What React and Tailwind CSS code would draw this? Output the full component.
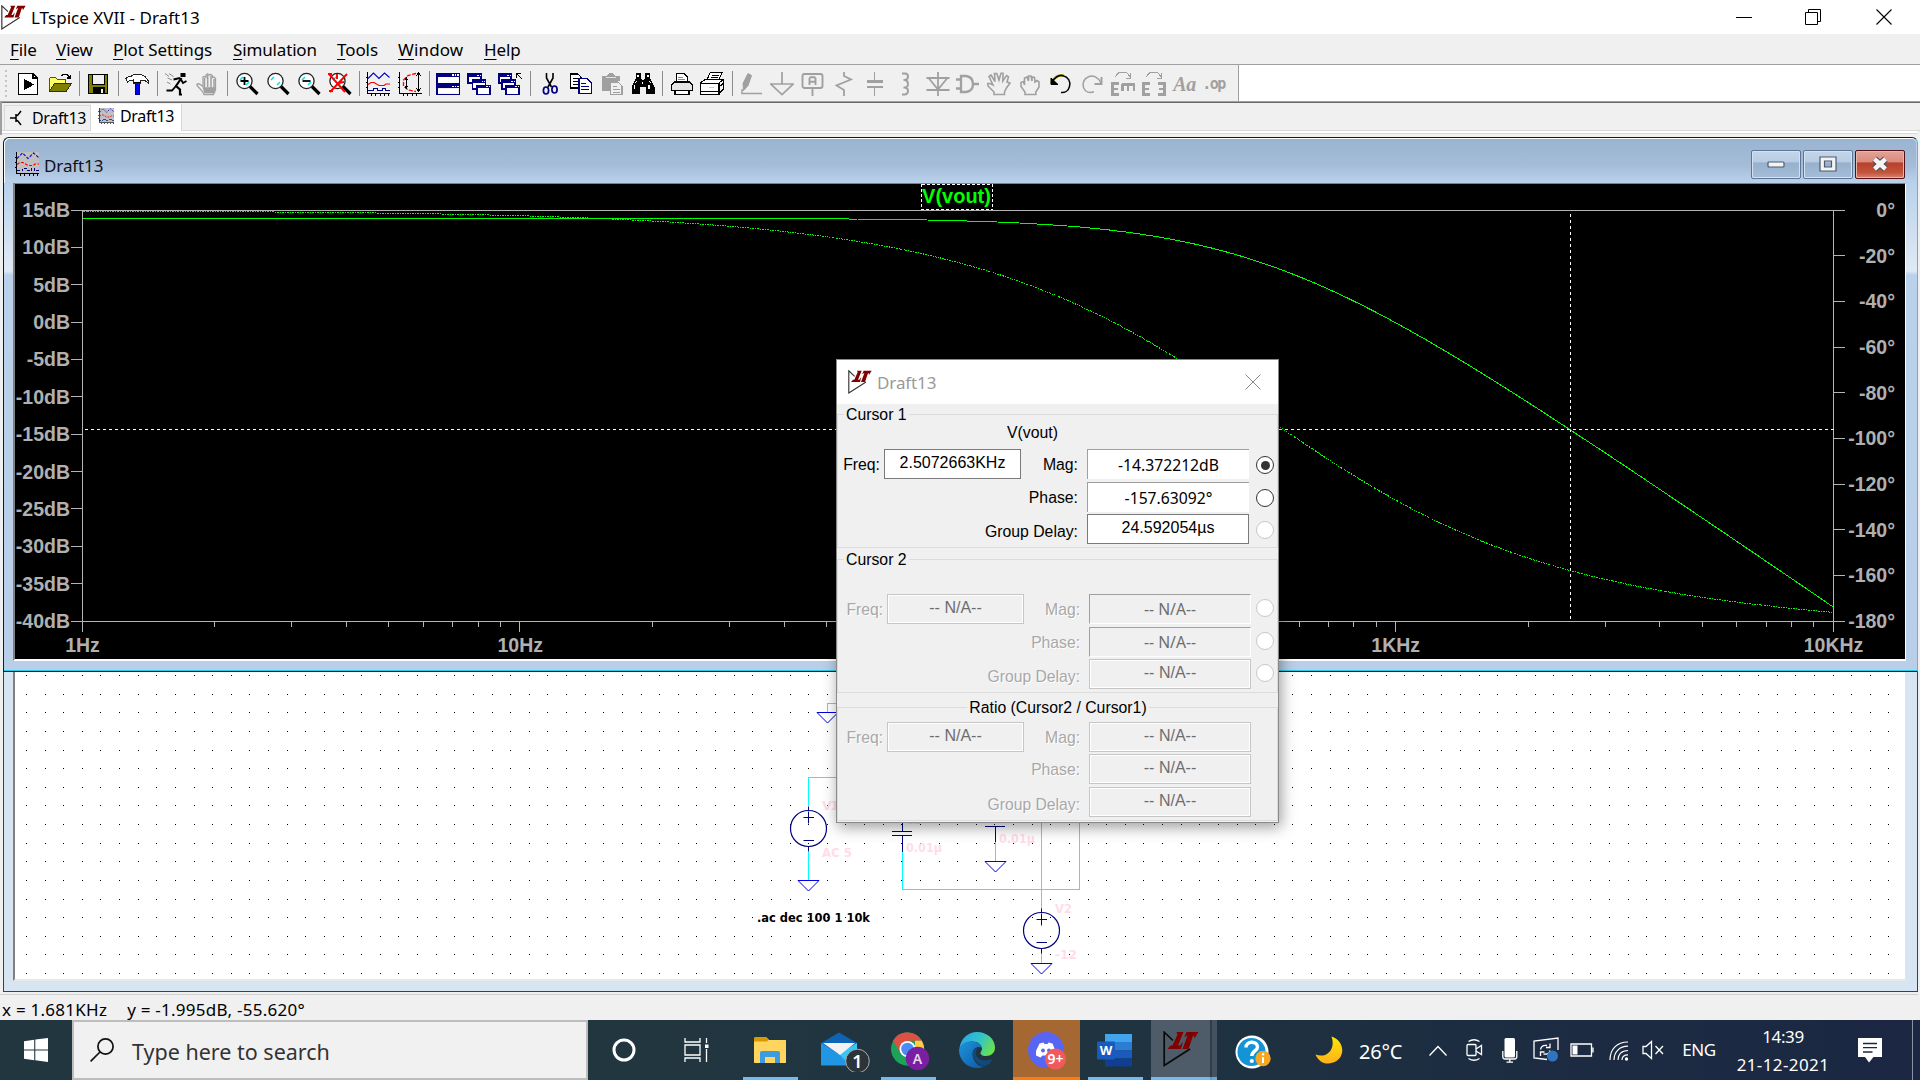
import React from "react";

const UI = "font-['Noto_Sans','Open_Sans',sans-serif]";
const ARIAL = "font-['Liberation_Sans',Arial,sans-serif]";

/* ---------- LT logo ---------- */
function LTLogo({ size = 24, line = "#333" }) {
  return (
    <svg width={size} height={size} viewBox="0 0 36 36" className="shrink-0">
      <path d="M10 9.500L1.200 1.200V34.500L27 18" fill="none" stroke={line} strokeWidth="1.700" />
      <path d="M13.500 1H20.500L15 14.500H17L20 10.500L18 18H4.500L7.500 14.500H9.500L14.500 3.500Z" fill="#800000" />
      <path d="M21 6.500L23.500 1H35.500L31.500 7.500L31 4.800H30L25.500 18H19.500L24.500 4.800H23.500Z" fill="#800000" />
    </svg>
  );
}

/* ---------- toolbar icons, 24 x 24 ---------- */
function I({ children, smooth, shift = "" }) {
  return (
    <span className={`flex w-[31px] shrink-0 justify-center ${shift}`}>
      <svg width="24" height="24" viewBox="0 0 24 24" fill="none" shapeRendering={smooth ? "auto" : "crispEdges"}>
        {children}
      </svg>
    </span>
  );
}
const Sep = () => (
  <span className="flex w-2 shrink-0 justify-center">
    <span className="h-[25px] w-px bg-[#8c8c8c]" />
  </span>
);
const G = "#a0a0a0";
const NV = "#000080";

function Lens({ children }) {
  return (
    <I smooth>
      <circle cx="9.500" cy="9" r="7.600" fill="#fff" stroke="#222" strokeWidth="1.300" />
      <path d="M5 8l3-3M11 13l3-3" stroke="#00e5e5" strokeWidth="1.500" />
      <path d="M15 14.500L22.500 22" stroke="#000" strokeWidth="3.200" />
      {children}
    </I>
  );
}

function MiniWin({ x, y, w = 13, h = 9 }) {
  return (
    <g>
      <rect x={x + 0.75} y={y + 0.75} width={w} height={h} fill="#fff" stroke={NV} strokeWidth="1.500" />
      <rect x={x} y={y} width={w + 1.5} height="3.500" fill={NV} />
      <path d={`M${x + w - 3} ${y + 2}h1.500M${x + w - 0.5} ${y + 2}h1`} stroke="#fff" strokeWidth="1" />
    </g>
  );
}

function PlotIcon({ size = 24, bg = "none" }) {
  const dash = bg === "none" ? undefined : "3 1.500";
  return (
    <svg width={size} height={size} viewBox="0 0 24 24" fill="none" shapeRendering="crispEdges" className="shrink-0">
      {bg !== "none" && <rect x="1" width="23" height="21" fill={bg} />}
      <path d="M1.500 0V21.500H24M0 5.500h1M0 10.500h1M0 15.500h1M5.500 22v2M9.500 22v2M14.500 22v2M18.500 22v2M22.500 22v2" stroke="#000" />
      <path d="M2 6.500L7.500 1L13 6.500L18.500 1L23.500 5.500" stroke="#0000d0" strokeWidth="1.100" strokeDasharray={dash} shapeRendering="auto" />
      <path d="M2 12.500L5 10.500H8L13 13.500H18L20 12H24" stroke="#f00" strokeWidth="1.200" strokeDasharray={dash} shapeRendering="auto" />
      <path d="M2 18.500H7.500V16.500H11.500V18.500H16.500V16.500H19.500V18.500H24" stroke={NV} strokeDasharray={dash} />
    </svg>
  );
}

function Toolbar() {
  return (
    <div className="flex h-[36px] shrink-0 bg-white">
      <div className="flex w-[1239px] items-center border-r border-[#a0a0a0] bg-[#f0f0f0] pt-px">
        <div className="flex w-[13px] shrink-0 flex-col items-center gap-[3px] pr-[2px]">
          {[0, 1, 2, 3, 4, 5].map((i) => (
            <span key={i} className="h-[2px] w-[2px] bg-[#c4c4c4]" />
          ))}
        </div>
        <I shift="pr-[2px]">
          <path d="M2.700 1.700H17.500L21.300 5.500V22.300H2.700Z" fill="#fff" stroke="#000" strokeWidth="1.400" />
          <path d="M17 1.700V6H21.300" stroke="#000" strokeWidth="1.200" />
          <path d="M7.500 6.500V18.500L18 12.500Z" fill="#000" />
        </I>
        <I>
          <path d="M1.500 18.500V6.500L3 5H7L9 7H17.500V11" fill="#ffff66" stroke="#555500" />
          <path d="M1.500 19L6.500 11.500H23.500L18.500 19Z" fill="#808000" stroke="#333300" />
          <path d="M13.500 4L15.500 2.200H19L22 5.500M22.500 2.500V6H19" stroke="#000" strokeWidth="1.300" />
        </I>
        <Sep />
        <I shift="pr-[2px]">
          <rect x="2.500" y="2.200" width="19" height="19.500" fill="#808000" stroke="#000" strokeWidth="1.400" />
          <rect x="6" y="2.500" width="12" height="9.500" fill="#f0f0f0" stroke="#000" />
          <rect x="6.500" y="15" width="12" height="6.500" fill="#000" />
          <rect x="14.500" y="16.500" width="2.500" height="4" fill="#f0f0f0" />
        </I>
        <Sep />
        <I shift="pr-[2px]">
          <path d="M10 11.500H14V22.500H10Z" fill="#0000ff" stroke={NV} />
          <path d="M.7 6.500L4 4.500L6.500 4L9 2.500H16L20 4.500L23.300 9V11L20 8.500H15.500V11.500H8.500V8L4.500 8.500L2.500 10Z" fill="#fff" stroke="#222" strokeWidth="1.100" />
          <path d="M8.500 10.500h7" stroke="#000" strokeWidth="1.800" />
        </I>
        <Sep />
        <I smooth shift="pr-[2px]">
          <path d="M16.500 1h5v4h-5z" fill="#000" />
          <path d="M17.500 6L12 14L16 17.500V22.500H18" stroke="#000" strokeWidth="2.200" />
          <path d="M16 6L9.500 7.500M17 7.500L19 11L22.500 9M12 14L8 18.500H2.500" stroke="#000" strokeWidth="1.800" />
          <path d="M1 1.500L5 4.500M5 1.500L9.500 4.500M3.500 6L8 8M3 10L6.500 12" stroke="#888" />
        </I>
        <I smooth>
          <path d="M8 22.500L7 20L1 13.500L1.200 12H3.500L7 14.500V5L8.200 4.500L10 5.500V3L11.500 1.800L13.200 3L15 2.500L16.500 4V5.500L18 5L19.500 6.500V18L17.500 20.500V22.500Z" fill="#f0f0f0" stroke={G} strokeWidth="1.300" />
          <path d="M7.500 16H18.500V20.500H9ZM8.500 6v10M11.700 3v12M15 4v12M18 7v10" fill={G} stroke={G} strokeWidth="1.500" />
        </I>
        <Sep />
        <Lens><path d="M5.500 9h8M9.500 5v8" stroke="#000" strokeWidth="1.800" /></Lens>
        <Lens />
        <Lens><path d="M5.500 9h8" stroke="#000" strokeWidth="1.800" /></Lens>
        <Lens><path d="M1 2L17 20M19 2L2 20M0 2h4M1 19h4M9 2v5M10 11l6-1" stroke="#f00" strokeWidth="1.900" /></Lens>
        <Sep />
        <span className="flex w-[31px] shrink-0 justify-center pr-[2px]"><PlotIcon /></span>
        <I>
          <path d="M1.500 0V21.500H24M0 5.500h1M0 10.500h1M0 15.500h1M5.500 22v2M9.500 22v2M14.500 22v2M18.500 22v2" stroke="#000" />
          <path d="M18 1.500L10 3.500L5.500 8V14L10 18L18 19.500" stroke="#f00" strokeWidth="1.300" strokeDasharray="4 1.500" shapeRendering="auto" />
          <path d="M20.500 1v18M18 4l2.500-3l2.500 3M18 16l2.500 3l2.500-3M8.500 6v10M7 8l1.500-2l1.500 2M7 14l1.500 2l1.500-2" stroke="#000" />
        </I>
        <Sep />
        <I shift="pr-[2px]">
          <rect x=".75" y="1.750" width="22.500" height="9.500" fill="#fff" stroke={NV} strokeWidth="1.500" />
          <path d="M0 3.200h24M0 14.500h24" stroke={NV} strokeWidth="3.500" />
          <rect x=".75" y="12.500" width="22.500" height="9.750" stroke={NV} strokeWidth="1.500" />
          <path d="M2 17h20v4H2z" fill="#fff" />
          <path d="M16 3h1.500M18.500 3h1.500M21 3h1.500M16 14.500h1.500M18.500 14.500h1.500M21 14.500h1.500" stroke="#fff" strokeWidth="1.200" />
        </I>
        <I shift="pr-[2px]"><MiniWin x={0} y={1} /><MiniWin x={4.5} y={7} /><MiniWin x={9} y={12.5} /></I>
        <I shift="pr-[2px]">
          <MiniWin x={0} y={1} w={12} /><MiniWin x={3} y={7} /><MiniWin x={7} y={12.5} />
          <path d="M18.500 6V1.500H23M19 2l5 5" stroke="#000" strokeWidth="1.300" />
        </I>
        <Sep />
        <I smooth>
          <path d="M8.500 1V6L13.500 15M15 1V6L10 15" stroke="#000" strokeWidth="1.600" />
          <ellipse cx="8" cy="18.500" rx="2.600" ry="3.500" stroke={NV} strokeWidth="1.700" />
          <ellipse cx="16.500" cy="17.500" rx="2.600" ry="3.500" stroke={NV} strokeWidth="1.700" />
        </I>
        <I>
          <path d="M1.500 2H9L12 5V16H1.500Z" fill="#fff" stroke="#000" strokeWidth="1.300" />
          <path d="M3.500 6h5M3.500 9h7M3.500 12h7" stroke="#000" />
          <path d="M10 6.500H18L22.500 11V21.500H10Z" fill="#fff" stroke={NV} strokeWidth="1.400" />
          <path d="M12 11h5M12 14h8M12 17h8" stroke={NV} />
        </I>
        <I>
          <path d="M2 4H7L9 1H13L15 4H20V9H10V19H2Z" fill={G} />
          <path d="M10.500 10H18L22 14V22.500H10.500Z" fill="#f0f0f0" stroke={G} strokeWidth="1.300" />
          <path d="M12.500 14h4M12.500 17h7M12.500 20h7" stroke={G} />
          <path d="M6 5.500h10" stroke="#e0e0e0" />
        </I>
        <I>
          <path d="M5 1H10V6L11 8H13L14 6V1H19V6L23.500 15V22H15V15H9V22H.5V15L5 6Z" fill="#000" />
          <path d="M7 3v2M17 3v2M3.500 13v4M5.500 9l-1 2M18.500 9l1 2M18 13v4M11.500 10v2" stroke="#fff" strokeWidth="1.300" />
        </I>
        <Sep />
        <I>
          <path d="M6.500 10V1.500H14L17.500 5V10" fill="#fff" stroke="#000" strokeWidth="1.100" />
          <path d="M4.500 10H19.500L22.500 13V18.500H1.500V13Z" fill="#e4e4e4" stroke="#000" strokeWidth="1.100" />
          <path d="M5 18.500H19V22.500H5Z" fill="#fff" stroke="#000" strokeWidth="1.100" />
          <path d="M8 5h5M8 7.500h7" stroke="#888" />
        </I>
        <I shift="pr-[2px]">
          <path d="M7 8L10 .8H22L18 9" fill="#fff" stroke="#000" strokeWidth="1.100" />
          <path d="M.8 10.500L5 7.500H23L19 11V22.300H.8Z" fill="#fff" stroke="#000" strokeWidth="1.200" />
          <path d="M.8 11H19M.8 19.500H19M19 15L23.300 11.500V8M19 22L23.300 17V11M11.500 3.300h7M10.500 5.600h7" stroke="#000" />
          <path d="M9 15.500h5" stroke="#e8e800" strokeWidth="1.500" />
        </I>
        <Sep />
        <I smooth>
          <path d="M8 1.500L11.500 3.500L8 13.500L3.500 18.500L3 11.500Z" fill={G} stroke={G} />
          <path d="M2 17V21.500H22" stroke={G} strokeWidth="1.500" />
        </I>
        <I smooth shift="pr-[2px]"><path d="M12 0V12M.8 12H23.200L12 22.500Z" stroke={G} strokeWidth="1.700" /></I>
        <I smooth shift="pr-[2px]">
          <rect x="1.500" y="2" width="20" height="14" rx="2" stroke={G} strokeWidth="1.900" />
          <path d="M11.500 16V24M8.500 13V6.500L9.500 5.200H13.500L14.500 6.500V13M8.500 9.800H14.500" stroke={G} strokeWidth="1.900" />
        </I>
        <I smooth shift="pr-[2px]"><path d="M12 0V4L19 7.500L4.500 13.500L12 18V24" stroke={G} strokeWidth="1.800" /></I>
        <I shift="pr-[2px]"><path d="M11.500 0V9M11.500 15V24" stroke={G} strokeWidth="1.500" /><path d="M3.500 9.500H19.500M3.500 15H19.500" stroke={G} strokeWidth="2.500" /></I>
        <I smooth shift="pr-[2px]"><path d="M8 1.500H11Q14 1.500 14 4.500T11 8H9.500H11Q14 8.500 14 12T11 15.500H9.500H11Q14 16 14 19T11 22.500H8" stroke={G} strokeWidth="1.900" /></I>
        <I smooth><path d="M12 0V24M.5 6H23.500M.5 18H23.500M3 6.500L12 17.500L21 6.500" stroke={G} strokeWidth="1.800" /></I>
        <I smooth shift="pr-[2px]"><path d="M0 7.500H5M0 16.500H5M5 4V20H10Q17 19 17 12T10 4ZM17 12H23" stroke={G} strokeWidth="2.300" /></I>
        <I smooth shift="pr-px">
          <path d="M7 22.500V20L1 14L.8 11.500H3L6 13L2 4.500L4 3L8 9.500L7.500 1.500H9.800L12 8L14 1.200H16L15.800 9L19.500 3.500L21.500 4.800L20 10L23 11L19.500 16L17.500 20V22.500Z" stroke={G} strokeWidth="1.600" />
        </I>
        <I smooth shift="pr-[2px]">
          <path d="M7 22.500V20L3 14.500V10.500L5.500 9.500L6.500 13V6L9 5L10.500 9V4L13 4L14 9V5L16.500 5.500L17 10L19 8.500L21 10V15L17.800 20V22.500Z" stroke={G} strokeWidth="1.600" />
        </I>
        <I smooth shift="pr-[2px]">
          <path d="M2.500 11C5 5 10 2.500 14.500 3.500" stroke="#a0a000" strokeWidth="2.600" />
          <path d="M2.500 11.500C5 5 10 3 14 3.800C19 5 22 9.500 20.500 14.500C19.500 18.500 16 21 12 20.500" stroke="#000" strokeWidth="1.500" />
          <path d="M2 6V12.500H9Z" fill="#000" stroke="#000" />
        </I>
        <I smooth shift="pr-[2px]">
          <path d="M21 11C18 5 13 3 9 4.500C4 6.500 2 11 3.500 15.500C5 19.500 9 21.500 14 19.800" stroke={G} strokeWidth="1.500" />
          <path d="M21.500 5V12H14.500" stroke={G} strokeWidth="2" />
        </I>
        <I shift="pr-[2px]">
          <path d="M4 5L7.500 .8H16L19 5M19.500 1V6H15" stroke={G} />
          <path d="M8 11.500H1.500V22.500H8M1.500 17H7" stroke={G} strokeWidth="2.300" />
          <path d="M10.500 12.500H24M11.500 12V18.500M17 12V18.500M22.800 12V18.500" stroke={G} strokeWidth="2.300" />
        </I>
        <I shift="pr-[2px]">
          <path d="M4 5L7.500 .8H16L19 5M19.500 1V6H15" stroke={G} />
          <path d="M8 11.500H1.500V22.500H8M1.500 17H7M16 11.500H22.500V22.500H16M22.500 17H17" stroke={G} strokeWidth="2.300" />
        </I>
        <span className="-ml-px flex w-[31px] shrink-0 justify-center font-['Liberation_Serif',serif] text-[20px] leading-6 font-bold italic tracking-[-0.5px] text-[#a0a0a0]">Aa</span>
        <span className="-ml-[2px] flex w-[31px] shrink-0 justify-center font-['DejaVu_Sans_Mono',monospace] text-[15px] leading-5 font-bold tracking-[-1.5px] text-[#a0a0a0]">.op</span>
      </div>
    </div>
  );
}

/* ---------- plot ---------- */
const X0 = 67.5, X1 = 1818.5, Y0 = 26.5, Y1 = 437.5;
const xf = (f) => X0 + (Math.log10(f) / 4) * (X1 - X0);
const response = (() => {
  const mag = [], ph = [];
  for (let i = 0; i <= 400; i++) {
    const f = 10 ** (i / 100);
    const r = f / 500.2;
    const re = 1 - r * r, im = r / 0.4965;
    const db = 13.979 - 20 * Math.log10(Math.hypot(re, im));
    const p = (-Math.atan2(im, re) * 180) / Math.PI - (1.8 * f) / 10000;
    mag.push(`${xf(f).toFixed(1)},${(Y0 + ((15 - db) / 55) * (Y1 - Y0)).toFixed(1)}`);
    ph.push(`${xf(f).toFixed(1)},${(Y0 + (-p / 180) * (Y1 - Y0)).toFixed(1)}`);
  }
  return { mag: mag.join(" "), ph: ph.join(" ") };
})();

function Plot() {
  const minors = [];
  for (let d = 0; d < 4; d++) for (let k = 2; k < 10; k++) minors.push(Math.round(xf(k * 10 ** d)));
  const cursorX = 1555.5, cursorY = 245.5;
  return (
    <svg width="1890" height="475" viewBox="0 0 1890 475" className="block bg-black" fill="none">
      <g stroke="#b4b4b4" strokeWidth="1" shapeRendering="crispEdges">
        <path d={`M56 ${Y0}H1830M56 ${Y1}H1830M${X0} ${Y0}V448M${X1} ${Y0}V448`} />
        {Array.from({ length: 10 }, (_, i) => (
          <path key={i} d={`M56 ${Math.round(Y0 + ((i + 1) * (Y1 - Y0)) / 11) - 0.5}H${X0}`} />
        ))}
        {Array.from({ length: 8 }, (_, i) => (
          <path key={i} d={`M${X1} ${Math.round(Y0 + ((i + 1) * (Y1 - Y0)) / 9) - 0.5}H1830`} />
        ))}
        {minors.map((x) => <path key={x} d={`M${x + 0.5} ${Y1}V443`} />)}
        {[1, 2, 3].map((d) => <path key={d} d={`M${Math.round(xf(10 ** d)) - 0.5} ${Y1}V448`} />)}
      </g>
      <polyline points={response.mag} stroke="#00ff00" strokeWidth="1" shapeRendering="crispEdges" />
      <polyline points={response.ph} stroke="#00ff00" strokeWidth="1" strokeDasharray="2 1 1 1" shapeRendering="crispEdges" />
      <path d={`M${X0 + 2} ${cursorY}H${X1}M${cursorX} ${Y0 + 3}V${Y1}`} stroke="#fff" strokeDasharray="3 3" shapeRendering="crispEdges" />
      <g className={ARIAL} fontSize="19.500" fontWeight="700" fill="#b0b0b0">
        {Array.from({ length: 12 }, (_, i) => (
          <text key={i} x="55" y={33 + (i * (Y1 - Y0)) / 11} textAnchor="end">{`${15 - 5 * i}dB`}</text>
        ))}
        {Array.from({ length: 10 }, (_, i) => (
          <text key={i} x="1880" y={33 + (i * (Y1 - Y0)) / 9} textAnchor="end">{`${i ? -20 * i : 0}°`}</text>
        ))}
        {["1Hz", "10Hz", "100Hz", "1KHz", "10KHz"].map((t, i) => (
          <text key={t} x={xf(10 ** i)} y="467.500" textAnchor="middle">{t}</text>
        ))}
      </g>
      <rect x="906.500" y=".5" width="71" height="25" stroke="#fff" strokeDasharray="3 2" shapeRendering="crispEdges" />
      <text x="941.500" y="19" textAnchor="middle" className={ARIAL} fontSize="20" fontWeight="700" fill="#00ff00">V(vout)</text>
    </svg>
  );
}

/* ---------- schematic; viewBox uses screen coordinates ---------- */
const dots = (() => {
  let d = "";
  for (let r = 0; r < 17; r++)
    for (let c = 0; c <= 100; c++) d += `M${Math.round(26 + c * 18.624)} ${Math.round(675 + r * 18.625)}h1v1h-1z`;
  return d;
})();
const Ground = ({ x, y }) => <path d={`M${x - 10.5} ${y}H${x + 10.5}L${x} ${y + 10.5}Z`} stroke="#0000e0" />;
const Source = ({ x, y }) => (
  <g stroke={NV}>
    <circle cx={x} cy={y} r="18" strokeWidth="1.200" />
    <path d={`M${x} ${y - 22}v4.500M${x} ${y + 18}v5M${x} ${y - 17}v12M${x - 5} ${y - 11}h10.500M${x - 5} ${y + 12}h10.500`} />
  </g>
);
function Schematic() {
  return (
    <svg width="1890" height="307" viewBox="15 672 1890 307" className="block bg-white" fill="none">
      <path d={dots} fill="#000" shapeRendering="crispEdges" />
      <g stroke="#00ffff" shapeRendering="crispEdges">
        <path d="M827.500 712.500V703.500H850M808.500 806V777.500H850M808.500 852V880M902.500 852V889.500H1079.500V800M995.500 842V861M1041.500 800V909M1041.500 953V963" />
      </g>
      <Ground x={827.5} y={712.5} />
      <Ground x={808.5} y={880.5} />
      <Ground x={995.5} y={861.5} />
      <Ground x={1041.5} y={963.5} />
      <Source x={808.5} y={828.5} />
      <Source x={1041.5} y={930.5} />
      <path d="M902.500 810V831M892 831.500H912M892 835.500H912M902.500 836V852M985 826.500H1005M995.500 826V842" stroke={NV} shapeRendering="crispEdges" />
      <g className="font-['DejaVu_Sans',sans-serif]" fontSize="12.500" fontWeight="700" fill="#ffdde8">
        <text x="822" y="810" textLength="17">V1</text>
        <text x="822" y="857" textLength="30" lengthAdjust="spacingAndGlyphs">AC 5</text>
        <text x="906" y="824" textLength="15" lengthAdjust="spacingAndGlyphs">C1</text>
        <text x="906" y="852" textLength="36" lengthAdjust="spacingAndGlyphs">0.01µ</text>
        <text x="999" y="843" textLength="36" lengthAdjust="spacingAndGlyphs">0.01µ</text>
        <text x="1055" y="913" textLength="17" lengthAdjust="spacingAndGlyphs">V2</text>
        <text x="1055" y="959" textLength="22" lengthAdjust="spacingAndGlyphs">-12</text>
        <text x="757" y="922" textLength="113" lengthAdjust="spacingAndGlyphs" fill="#000">.ac dec 100 1 10k</text>
      </g>
    </svg>
  );
}

/* ---------- cursor dialog ---------- */
function Field({ value, w, kind, disabled, ui }) {
  const look = {
    box: "border border-[#7a7a7a] bg-white pt-[3px]",
    sunken: "border-t border-l border-[#a0a0a0] bg-white pt-[4px]",
    off: "border border-[#c6c6c6] bg-[#f0f0f0] pt-[3px] shadow-[inset_0_0_0_1px_#fff]",
    offSunken: "border border-t-[#a0a0a0] border-l-[#a0a0a0] border-r-white border-b-white bg-[#f0f0f0] pt-[3px]",
  }[kind];
  return (
    <div className={`flex h-[30px] shrink-0 justify-center ${w} ${look} ${disabled ? "text-[#6d6d6d]" : "text-black"}`}>
      <span className={`whitespace-pre leading-5 ${ui ? `${UI} pt-px text-[15.700px]` : "text-[16px]"}`}>{value}</span>
    </div>
  );
}
const Label = ({ children, disabled, w, low }) => (
  <span className={`shrink-0 whitespace-nowrap text-right leading-5 ${low ? "pt-[8px]" : "pt-[6px]"} ${w} ${disabled ? "text-[15.700px] text-[#a8a8a8] [text-shadow:1px_1px_0_#fff]" : "text-black"}`}>
    {children}
  </span>
);
const Radio = ({ on, disabled, off }) => (
  <span className={`flex h-[18px] w-[18px] shrink-0 items-center justify-center rounded-full border bg-white ${off ? "ml-[5px] mt-[5px]" : "ml-[7px] mt-[7px]"} ${disabled ? "border-[#c8c8c8]" : "border-[#333]"}`}>
    {on && <span className="h-[9px] w-[9px] rounded-full bg-[#333]" />}
  </span>
);
const Legend = ({ children, cls }) => (
  <div className={`flex h-0 items-center ${cls}`}>
    <span className="bg-[#f0f0f0] px-[2px] leading-5 whitespace-nowrap">{children}</span>
  </div>
);
function Rows({ off, freq, mag, phase, delay, sunken, radios }) {
  const gap = "ml-[9px]";
  const sk = off ? (sunken ? "offSunken" : "off") : "sunken";
  return (
    <div className="flex flex-col">
      <div className={`flex ${sunken ? "h-[33px]" : "h-[32px]"}`}>
        <Label disabled={off} w={off ? "w-[45px]" : "w-[42px]"}>Freq:</Label>
        <span className="ml-[4px]"><Field w="w-[137px]" value={freq} kind={off ? "off" : "box"} disabled={off} /></span>
        <Label disabled={off} w={off ? "w-[56px]" : "w-[57px]"}>Mag:</Label>
        <span className={gap}><Field w="w-[162px]" value={mag} kind={sk} disabled={off} ui={sunken} /></span>
        {radios && <Radio on={radios[0] === 1} disabled={radios[0] === 2} off={off} />}
      </div>
      <div className={`flex ${sunken ? "h-[32px]" : "h-[33px]"}`}>
        <Label disabled={off} w={off ? "w-[242px]" : "w-[240px]"}>Phase:</Label>
        <span className={gap}><Field w="w-[162px]" value={phase} kind={sk} disabled={off} ui={sunken} /></span>
        {radios && <Radio disabled={radios[1] === 2} off={off} />}
      </div>
      <div className="flex h-[30px]">
        <Label disabled={off} w={off ? "w-[242px]" : "w-[240px]"} low>Group Delay:</Label>
        <span className={gap}><Field w="w-[162px]" value={delay} kind={off ? "off" : "box"} disabled={off} /></span>
        {radios && <Radio disabled off={off} />}
      </div>
    </div>
  );
}
function CursorDialog() {
  const na = "-- N/A--";
  return (
    <div className={`absolute left-[836px] top-[359px] z-10 flex h-[464px] w-[443px] flex-col border border-[#8a8a8a] bg-[#f0f0f0] text-[15.800px] shadow-[2px_4px_14px_rgba(0,0,0,0.4)] ${ARIAL}`}>
      <div className="flex h-[44px] shrink-0 items-center bg-white pl-[11px] pr-[17px]">
        <LTLogo size={24} />
        <span className={`ml-[5px] mt-[2px] text-[17px] leading-6 tracking-[-0.1px] text-[#999] ${UI}`}>Draft13</span>
        <svg width="16" height="16" viewBox="0 0 16 16" className="-mt-px ml-auto"><path d="M.5.5L15.500 15.500M15.500.5L.5 15.500" stroke="#888" /></svg>
      </div>
      <div className="mt-[10px] h-[134px] shrink-0 border border-[#dcdcdc]">
        <Legend cls="pl-[6px]">Cursor 1</Legend>
        <div className="h-[34px] pt-[8px] pl-[169px] leading-5">V(vout)</div>
        <Rows sunken freq="2.5072663KHz" mag="-14.372212dB" phase="-157.63092°" delay="24.592054µs" radios={[1, 0, 2]} />
      </div>
      <div className="mt-[11px] h-[134px] shrink-0 border border-[#dcdcdc]">
        <Legend cls="pl-[6px]">Cursor 2</Legend>
        <div className="h-[34px]" />
        <Rows off sunken freq={na} mag={na} phase={na} delay={na} radios={[2, 2, 2]} />
      </div>
      <div className="mt-[14px] h-[114px] shrink-0 border border-[#dcdcdc]">
        <Legend cls="justify-center pl-px">Ratio (Cursor2 / Cursor1)</Legend>
        <div className="h-[14px]" />
        <Rows off freq={na} mag={na} phase={na} delay={na} />
      </div>
    </div>
  );
}

/* ---------- taskbar ---------- */
function Cell({ w, bar, bg = "", children }) {
  return (
    <div className={`relative flex h-[60px] shrink-0 items-center justify-center ${w} ${bg}`}>
      {children}
      {bar && <span className={`absolute bottom-0 h-[3px] ${bar}`} />}
    </div>
  );
}
function Taskbar() {
  return (
    <div className={`flex h-[60px] shrink-0 overflow-hidden bg-[linear-gradient(90deg,#21363f_0%,#21363f_35%,#1f3340_60%,#1d2d41_75%,#1b2743_100%)] text-white ${UI}`}>
      <Cell w="w-[72px]">
        <svg width="24" height="24" viewBox="0 0 24 24" fill="#fff"><path d="M0 3.300L10.200 1.800V11.400H0ZM11.300 1.600L24 0V11.400H11.300ZM0 12.500H10.200V22.200L0 20.700ZM11.300 12.500H24V24L11.300 22.300Z" /></svg>
      </Cell>
      <div className="flex w-[516px] shrink-0 items-center border-2 border-[#bdbdbd] bg-[#f1f1f1] pl-[16px]">
        <svg width="24" height="24" viewBox="0 0 24 24" fill="none" stroke="#111" strokeWidth="1.700"><circle cx="15.500" cy="8.500" r="7.600" /><path d="M10 14L.6 23.400" /></svg>
        <span className="ml-[18px] mt-[3px] whitespace-nowrap text-[21.500px] leading-7 tracking-[0px] text-[#333]">Type here to search</span>
      </div>
      <Cell w="w-[72px]">
        <svg width="26" height="26" viewBox="0 0 26 26"><circle cx="13" cy="13" r="10" fill="none" stroke="#fff" strokeWidth="3" /></svg>
      </Cell>
      <Cell w="w-[73px]">
        <svg width="25" height="24" viewBox="0 0 25 24" fill="none" stroke="#fff" strokeWidth="1.300"><path d="M1 0V4H16V0M1 24V20H16V24M1 7H16V17H1ZM22.500 0V5M22.500 11V24" /><path d="M21 6.500h3.500v3.500H21z" fill="#fff" stroke="none" /></svg>
      </Cell>
      <Cell w="w-[75px]" bar="w-[55px] bg-[#76b9ed]">
        <svg width="32" height="27" viewBox="0 0 32 27" className="mr-px"><path d="M0 2Q0 0 2 0H12L15 3H32V26H0Z" fill="#e0a000" /><rect y="3" width="32" height="23" rx="1" fill="#ffd560" /><path d="M0 3V2Q0 0 2 0H12L15 2.500L13 4.500H0Z" fill="#d99a00" /><path d="M6 26V15.500Q6 14 8 14H24Q26 14 26 15.500V26H21V20H11V26Z" fill="#3d9be0" /></svg>
      </Cell>
      <Cell w="w-[69px]">
        <svg width="50" height="44" viewBox="0 0 50 44" className="ml-[5px]">
          <path d="M1 15L19 4.500L37 15V22H1Z" fill="#0f63b5" />
          <path d="M1 15L19 26L37 15V37.500H1Z" fill="#2196e3" /><path d="M19 26L37 15V37.500H30Z" fill="#38c6f5" /><path d="M3 15H35L20 27Z" fill="#f2f2f2" />
          <circle cx="37.500" cy="33" r="11.800" fill="#2b3438" stroke="#aaa" /><text x="37.500" y="39.500" textAnchor="middle" fontSize="18" fontWeight="600" fill="#fff">1</text>
        </svg>
      </Cell>
      <Cell w="w-[70px]" bar="w-[55px] bg-[#76b9ed] left-[4px]">
        <svg width="42" height="42" viewBox="0 0 42 42" className="mr-[5px]">
          <circle cx="18.500" cy="20" r="16.500" fill="#1da25a" />
          <path d="M18.500 20L4.200 11.700A16.500 16.500 0 0 1 32.800 11.700H18.500Z" fill="#dd5144" /><path d="M4.200 11.700A16.500 16.500 0 0 1 18.500 3.500V12L11.500 24Z" fill="#dd5144" />
          <path d="M32.800 11.700A16.500 16.500 0 0 1 18.500 36.500L26 24V11.700Z" fill="#ffcd46" />
          <circle cx="18.500" cy="20" r="8" fill="#fff" /><circle cx="18.500" cy="20" r="6.300" fill="#4c8bf5" />
          <circle cx="28.500" cy="29.500" r="11.700" fill="#7b1fa2" /><text x="28.500" y="35" textAnchor="middle" fontSize="14" fontWeight="600" fill="#e6d4ef">A</text>
        </svg>
      </Cell>
      <Cell w="w-[66px]">
        <svg width="36" height="36" viewBox="0 0 36 36" className="mr-[6px]">
          <defs>
            <linearGradient id="edgeTop" x1="0" x2="1" y1=".2" y2=".6"><stop offset="0" stopColor="#2aa6e0" /><stop offset=".5" stopColor="#2fc2cf" /><stop offset="1" stopColor="#6be04c" /></linearGradient>
            <linearGradient id="edgeLow" x1="0" x2="1" y1="0" y2="1"><stop offset="0" stopColor="#1f94dc" /><stop offset="1" stopColor="#0c59a4" /></linearGradient>
          </defs>
          <path d="M.5 17C1 7 9 0 18 0C28 0 36 7 36 15.500C36 21 32 24 27 24C23 24 21.500 22.500 21.500 21C21.500 19.500 23 19 23 16.500C23 13 19 9.500 13 9.500C7 9.500 2 13 .5 17Z" fill="url(#edgeTop)" />
          <path d="M0 18C1 12.500 6 9.500 12 9.500C18 9.500 22.500 12.500 23 16C18 13 13.500 17 13.500 22C13.500 28 18 34.500 25 34.500C22 36 20 36 18 36C8 36 0 28 0 18Z" fill="url(#edgeLow)" />
          <path d="M14 19C12.500 25 18 34 26 34C30 32.500 32.500 29.500 33.500 27C29 29 22 29.500 18.500 25.500C16.500 23.500 16 20 18.500 16.500C16 16 14.500 17 14 19Z" fill="#124a80" />
        </svg>
      </Cell>
      <Cell w="w-[67px]" bg="bg-[#a66833]" bar="w-full bg-[#ff7a0a]">
        <svg width="42" height="42" viewBox="0 0 42 42" className="ml-[2px]">
          <circle cx="19" cy="21" r="18" fill="#5865f2" />
          <path d="M12.500 14.500L16.500 13.500L17.500 15H20.500L21.500 13.500L25.500 14.500L28.500 22V26.500L24.500 28.500L22.500 26.500H15.500L13.500 28.500L9 26.500V22Z" fill="#fff" />
          <circle cx="16" cy="21.500" r="1.900" fill="#5865f2" /><circle cx="22" cy="21.500" r="1.900" fill="#5865f2" />
          <circle cx="28.500" cy="30" r="10.500" fill="#f05a5a" /><text x="28.500" y="35" textAnchor="middle" fontSize="14" fontWeight="600" fill="#fff">9+</text>
        </svg>
      </Cell>
      <Cell w="w-[71px]" bar="w-[55px] bg-[#76b9ed]">
        <svg width="36" height="33" viewBox="0 0 36 33" className="mr-px">
          <path d="M8 0H35V9H8Z" fill="#41a5ee" /><path d="M8 8H35V16.500H8Z" fill="#2b7cd3" /><path d="M8 16.500H35V24.500H8Z" fill="#185abd" /><path d="M8 24.500H35V32.500H8Z" fill="#103f91" />
          <rect y="7.500" width="18" height="18" rx="1" fill="#185abd" /><text x="9" y="21" textAnchor="middle" fontSize="13" fontWeight="700" fill="#fff">W</text>
        </svg>
      </Cell>
      <div className="flex w-[66px] shrink-0">
        <div className="flex w-[59px] justify-center border-b-[3px] border-[#76b9ed] bg-[#4d5c68] pt-[11px]"><LTLogo size={36} line="#0a0a0a" /></div>
        <div className="w-[2px] border-b-[3px] border-[#6299c4] bg-[#303d48]" />
        <div className="w-[5px] border-b-[3px] border-[#6aa6d6] bg-[#44525f]" />
      </div>
      <Cell w="w-[70px]">
        <svg width="38" height="38" viewBox="0 0 38 38" className="mt-[2px] ml-[2px]">
          <circle cx="18" cy="20" r="16.500" fill="#fff" /><circle cx="17.500" cy="20" r="14" fill="#1493d6" />
          <path d="M12 15.500C12 8.500 23.500 8.500 23.500 15C23.500 19 17.800 19 17.800 24" fill="none" stroke="#fff" strokeWidth="3.400" /><circle cx="17.800" cy="29" r="2.100" fill="#fff" />
          <circle cx="29" cy="26.500" r="7.700" fill="#f5a623" /><path d="M29 25v6" stroke="#fff" strokeWidth="2" /><circle cx="29" cy="22.300" r="1.200" fill="#fff" />
        </svg>
      </Cell>
      <Cell w="w-[72px]">
        <svg width="28" height="28" viewBox="0 0 28 28" className="ml-[12px]"><defs><linearGradient id="moon" x1="0" y1="0" x2="0" y2="1"><stop offset="0" stopColor="#ffe600" /><stop offset="1" stopColor="#ffb01c" /></linearGradient></defs><path d="M16.500 .5C31 4.500 31.500 26 14 27.500C8 28 3 24.500 .5 18.500C12 23 21 13 16.500 .5Z" fill="url(#moon)" /></svg>
      </Cell>
      <span className="w-[61px] shrink-0 pt-[16px] text-[20px] leading-8 tracking-[-0.2px] whitespace-nowrap">26°C</span>
      <Cell w="w-[36px]"><svg width="18" height="11" viewBox="0 0 18 11"><path d="M.5 10.500L9 1.500L17.500 10.500" fill="none" stroke="#fff" strokeWidth="1.400" /></svg></Cell>
      <Cell w="w-[36px]">
        <svg width="17" height="24" viewBox="0 0 17 24" fill="none" stroke="#fff" strokeWidth="1.300"><rect x="1" y="6.500" width="9" height="11" rx="1" /><path d="M10 11L15.500 7.500V16.500L10 13M2.500 3.500Q8 0 13.500 3.500M2.500 20.500Q8 24 13.500 20.500" /></svg>
      </Cell>
      <Cell w="w-[36px]">
        <svg width="16" height="25" viewBox="0 0 16 25" className="mr-px"><rect x="2.500" y="0" width="10.500" height="19.500" rx="1.500" fill="#fff" /><path d="M.8 13V18.500Q.8 21 3 21H12.500Q14.800 21 14.800 18.500V13M7.800 21V24M4.500 24.200H11" stroke="#fff" strokeWidth="1.300" fill="none" /></svg>
      </Cell>
      <Cell w="w-[36px]">
        <svg width="26" height="25" viewBox="0 0 26 25" fill="none" stroke="#fff" strokeWidth="1.300" className="-mt-[2px]"><path d="M25 13V1L1 4V21L14 22.500M7.500 12.500Q8.500 7.500 14 8.500M17 6.500V10.500H13M17 13.500Q16 18 10.500 17M7.500 19V15H11.500" /><circle cx="19.500" cy="19" r="5.500" fill="#2f74c0" stroke="none" /></svg>
      </Cell>
      <Cell w="w-[36px]">
        <svg width="24" height="14" viewBox="0 0 24 14" fill="none" stroke="#fff" strokeWidth="1.300"><path d="M1 1H21.500V13H1ZM23 4.500V9.500" /><path d="M2.500 2.500H7.500V11.500H2.500Z" fill="#fff" stroke="none" /></svg>
      </Cell>
      <Cell w="w-[36px]">
        <svg width="21" height="20" viewBox="0 0 21 20" fill="none" stroke="#fff" strokeWidth="1.200" className="mt-[2px] ml-[2px]"><path d="M1 19C1 8 8 1 19 1M5 19C5 11 10.500 5.200 19 5.200M9 19C9 13.500 12.500 9.500 19 9.500M13 19C13 16 15 13.800 19 13.800" /><circle cx="17.500" cy="18" r="1.700" fill="#fff" stroke="none" /></svg>
      </Cell>
      <Cell w="w-[34px]">
        <svg width="22" height="20" viewBox="0 0 22 20" fill="none" stroke="#fff" strokeWidth="1.300"><path d="M1 6.500V13.500H4L9.500 18.500V1.500L4 6.500ZM13.500 6L21 14M21 6L13.500 14" /></svg>
      </Cell>
      <Cell w="w-[60px]"><span className="mr-[2px] text-[17px] tracking-[-0.4px]">ENG</span></Cell>
      <div className="flex w-[106px] shrink-0 flex-col items-center pt-[3px] text-[17px] leading-7"><span className="tracking-[-0.4px]">14:39</span><span className="tracking-[0.4px]">21-12-2021</span></div>
      <Cell w="w-[70px]">
        <svg width="24" height="25" viewBox="0 0 24 25" className="mr-[2px]"><path d="M0 0H24V19H15.500L11 24.500L7 19H0Z" fill="#fff" /><path d="M5 5.500H19M5 9.700H19M5 14H14.500" stroke="#1b2743" strokeWidth="1.300" /></svg>
      </Cell>
      <div className="ml-[6px] w-px shrink-0 bg-[#8a93a2]" />
    </div>
  );
}

/* ---------- shell ---------- */
const menu = [["File", "w-[46px]"], ["View", "w-[57px]"], ["Plot Settings", "w-[120px]"], ["Simulation", "w-[104px] tracking-[-0.15px]"], ["Tools", "w-[61px]"], ["Window", "w-[86px] tracking-[0.15px]"], ["Help", "w-[60px]"]];

function MdiButton({ red, children }) {
  return (
    <span className={`flex h-[29px] w-[50px] items-center justify-center rounded-[2px] border ${red ? "border-[#4f1018] bg-[linear-gradient(#e3a397_0%,#d98a7c_42%,#b8402b_43%,#c2553c_80%,#d98370_100%)] shadow-[inset_0_0_0_1px_#e9b5ab]" : "border-[#5f7594] bg-[linear-gradient(#c3d5e9_0%,#b7cce4_42%,#97b0cd_43%,#a4bdd8_100%)] shadow-[inset_0_0_0_1px_#d3e1f0]"}`}>
      {children}
    </span>
  );
}

export default function App() {
  return (
    <div className={`relative flex h-[1080px] w-[1920px] flex-col overflow-hidden bg-[#f0f0f0] text-black ${UI}`}>
      <header className="flex h-[34px] shrink-0 items-center bg-white">
        <div className="flex items-center pl-[1px]">
          <LTLogo size={25} />
          <span className="ml-[5px] mt-[1px] text-[17px] leading-6 tracking-[0.02px] whitespace-nowrap">LTspice XVII - Draft13</span>
        </div>
        <div className="ml-auto flex items-center pr-[28px]">
          <svg width="16" height="16" viewBox="0 0 16 16" className="mr-[53px]"><path d="M0 8.500H16" stroke="#000" /></svg>
          <svg width="16" height="16" viewBox="0 0 16 16" fill="none" stroke="#000" className="mr-[55px]"><path d="M.5 3.500H12.500V15.500H.5ZM3.500 3.500V.5H15.500V12.500H12.500" /></svg>
          <svg width="16" height="16" viewBox="0 0 16 16"><path d="M.5.5L15.500 15.500M15.500.5L.5 15.500" stroke="#000" strokeWidth="1.100" /></svg>
        </div>
      </header>

      <nav className="flex h-[31px] shrink-0 items-center border-b border-[#a0a0a0] pt-[2px] pl-[10px] text-[17px] tracking-[-0.08px]">
        {menu.map(([m, w]) => (
          <span key={m} className={`shrink-0 whitespace-nowrap leading-6 ${w}`}>
            <span className="underline decoration-1 underline-offset-[3px]">{m[0]}</span>{m.slice(1)}
          </span>
        ))}
      </nav>
      <Toolbar />

      <div className="flex h-[34px] shrink-0 flex-col border-t border-l-2 border-[#a0a0a0] shadow-[inset_0_1px_0_#696969]">
        <div className="flex h-[29px] items-end border-b border-[#d9d9d9] pl-[2px] pt-[2px] text-[16px] tracking-[-0.35px]">
          <div className="flex h-[25px] w-[87px] items-center border border-b-0 border-[#d9d9d9] pl-[4px]">
            <svg width="14" height="16" viewBox="0 0 14 16" fill="none" stroke="#000" strokeWidth="1.500"><path d="M1 8H7M7 4V12M7 6L9 5L12 1M7 10L9 11L12 15" /></svg>
            <span className="ml-[9px] leading-5">Draft13</span>
          </div>
          <div className="-mb-px flex h-[27px] w-[91px] items-center border-r border-[#d9d9d9] bg-white pb-[3px] pl-[7px]">
            <PlotIcon size={16} bg="#c0c0c0" />
            <span className="ml-[6px] leading-5">Draft13</span>
          </div>
        </div>
        <div className="mr-[3px] h-[3px] border-b border-[#d9d9d9] bg-white" />
      </div>

      <main className="flex min-h-0 flex-1 flex-col pl-[3px] pr-[2px] pt-[2px]">
        {/* plot window */}
        <section className="flex h-[535px] shrink-0 flex-col rounded-t-[6px] border border-[#151a1c] border-r-[#20d0e8] bg-[#b9cfe9] shadow-[inset_1px_1px_0_#fff]">
          <div className="m-px flex h-[43px] shrink-0 items-center rounded-t-[5px] bg-[linear-gradient(#99b4d1_0%,#a4bcd8_60%,#b9d1ea_100%)] pl-[10px]">
            <span className="mt-[7px]"><PlotIcon bg="#c0c0c0" /></span>
            <span className="ml-[5px] mt-[10px] text-[17px] leading-6 tracking-[-0.1px] text-[#111]">Draft13</span>
            <div className="ml-auto mt-[7px] flex gap-[2px] pr-[11px]">
              <MdiButton><svg width="18" height="7"><rect x="1" y="1" width="16" height="5" rx="1" fill="#f4f4f4" stroke="#4d5a70" strokeWidth="1.200" /></svg></MdiButton>
              <MdiButton><svg width="18" height="16" fill="#f4f4f4" stroke="#4d5a70" strokeWidth="1.200"><path fillRule="evenodd" d="M1 1H17V15H1ZM5.500 5H12.500V11H5.500Z" /></svg></MdiButton>
              <MdiButton red><svg width="18" height="16"><path d="M3.500 3L14.500 13M14.500 3L3.500 13" stroke="#4d4a5a" strokeWidth="6.500" /><path d="M3.500 3L14.500 13M14.500 3L3.500 13" stroke="#f4f4f4" strokeWidth="4.400" /></svg></MdiButton>
            </div>
          </div>
          <div className="flex flex-1 flex-col bg-[linear-gradient(#b9d1ea_0px,#dfe9f5_85px,#dfe9f5_88px,#b9d1ea_92px,#b9cfe9_100%)] pl-[9px]">
            <div className="w-[1893px] border-t border-l-2 border-r border-b-2 border-t-[#808080] border-l-[#808080] border-r-white border-b-white">
              <Plot />
            </div>
            <div className="mt-auto h-px -ml-[9px] bg-[#20d0e8]" />
          </div>
        </section>
        {/* schematic window */}
        <section className="flex flex-col border-l border-b border-r border-[#404040] bg-[#d7e4f2] pb-[10px] pl-[9px]">
          <div className="w-[1893px] border-l-2 border-r border-b-2 border-l-[#808080] border-r-[#e3e3e3] border-b-[#e8e8e8]">
            <Schematic />
          </div>
        </section>
        <div className="-ml-[3px] mt-[2px] h-px bg-[#d0d0d0]" />
      </main>

      <footer className="flex h-[25px] shrink-0 items-center gap-[20px] pt-[4px] pl-[2px] text-[17px] leading-5 tracking-[0.25px]">
        <span>x = 1.681KHz</span>
        <span>y = -1.995dB, -55.620°</span>
      </footer>
      <Taskbar />
      <CursorDialog />
    </div>
  );
}
